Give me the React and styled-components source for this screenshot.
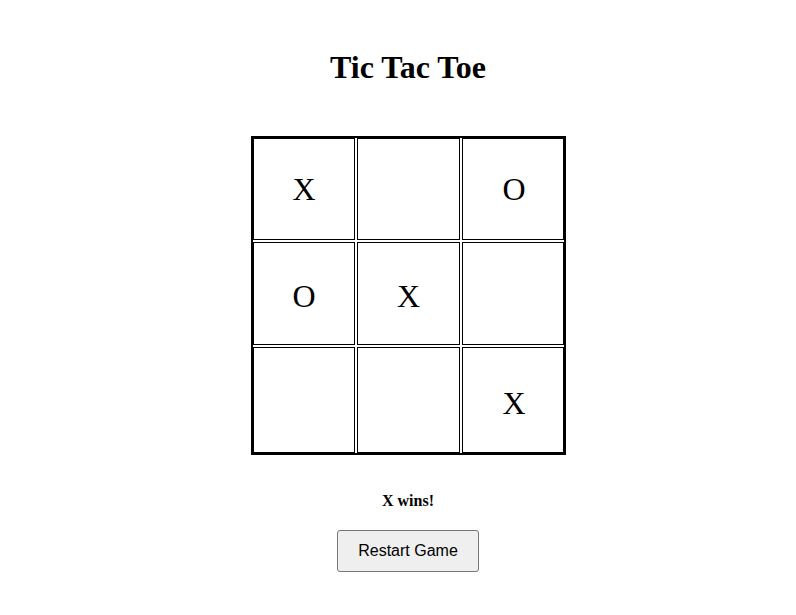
import React from "react";
import styled, { createGlobalStyle } from "styled-components";

const Global = createGlobalStyle`
  html, body { margin: 0; padding: 0; background: #ffffff; }
  body { font-family: "Liberation Serif", "Times New Roman", serif; color: #000; }
`;

const Page = styled.div`
  display: flex;
  flex-direction: column;
  align-items: center;
  padding-top: 49px;
  padding-left: 20px;
`;

const Title = styled.h1`
  margin: 0;
  font-size: 32px;
  line-height: 37px;
  font-weight: bold;
`;

const Board = styled.div`
  margin-top: 50px;
  margin-left: 1px;
  border: 2px solid #000;
  display: grid;
  grid-template-columns: 102px 103px 102px;
  grid-template-rows: 102px 103px 106px;
  column-gap: 2px;
  row-gap: 2px;
`;

const Cell = styled.div`
  box-sizing: border-box;
  border: 1px solid #000;
  background: #fff;
  display: flex;
  align-items: center;
  justify-content: center;
  font-family: "Liberation Serif", "Times New Roman", serif;
  font-size: 32px;
  line-height: 1;
  padding-top: ${(p) => p.$padTop || 0}px;
  padding-left: ${(p) => p.$padLeft || 0}px;
`;

const Status = styled.div`
  margin-top: 37px;
  font-size: 16px;
  font-weight: bold;
  line-height: 18px;
`;

const RestartButton = styled.button`
  margin-top: 20px;
  box-sizing: border-box;
  height: 42px;
  padding: 0 20px;
  border: 1px solid #767676;
  border-radius: 3px;
  background: #efefef;
  font-family: "Liberation Sans", Arial, sans-serif;
  font-size: 16px;
  color: #000;
`;

const squares = ["X", "", "O", "O", "X", "", "", "", "X"];
const rowPad = [0, 4, 6];
const colPad = [0, 0, 2];

export default function App() {
  return (
    <>
      <Global />
      <Page>
        <Title>Tic Tac Toe</Title>
        <Board>
          {squares.map((v, i) => (
            <Cell key={i} $padTop={rowPad[Math.floor(i / 3)]} $padLeft={colPad[i % 3]}>
              {v}
            </Cell>
          ))}
        </Board>
        <Status>X wins!</Status>
        <RestartButton>Restart Game</RestartButton>
      </Page>
    </>
  );
}
